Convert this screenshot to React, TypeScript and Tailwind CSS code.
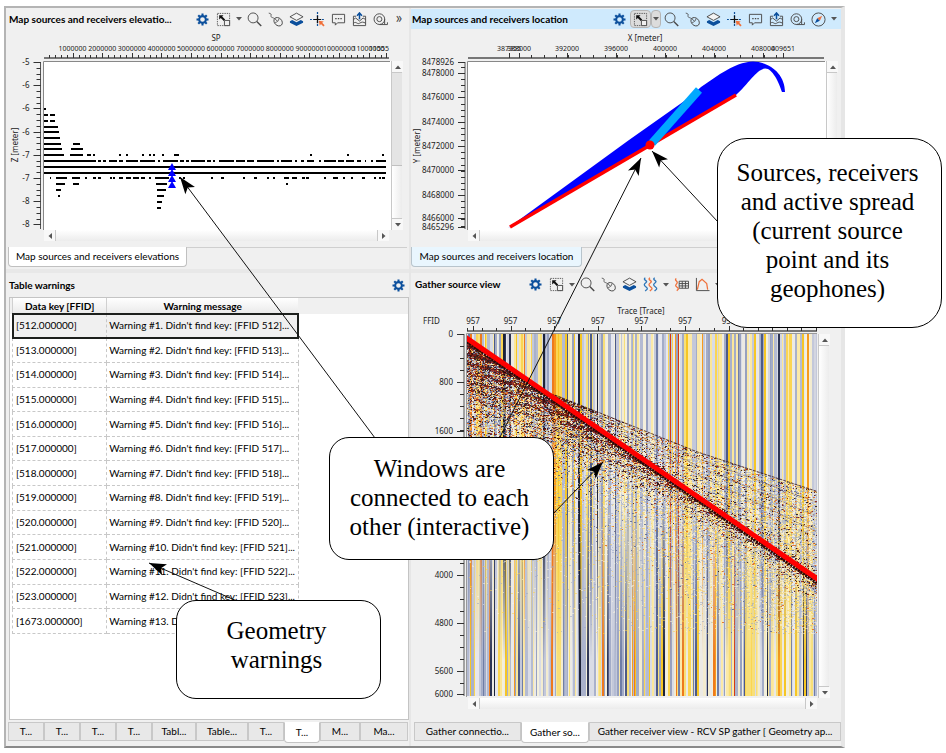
import type { ReactNode } from "react"

const AXIS = "'Noto Sans',sans-serif"
const BLUE = "#0b4f9c"
const ORANGE = "#f0703a"

/* ---------- icons ---------- */

function Icon({ children }: { children: ReactNode }) {
  return (
    <svg viewBox="0 0 16 16" className="h-[15px] w-[15px]" fill="none" stroke="#4a4a4a">
      {children}
    </svg>
  )
}

const GearIcon = () => (
  <Icon>
    <g stroke={BLUE}>
      <circle cx="8" cy="8" r="3.6" strokeWidth="2.2" />
      {[0, 45, 90, 135, 180, 225, 270, 315].map((a) => (
        <path key={a} d="M8 1.6v2.4" strokeWidth="2.2" transform={`rotate(${a} 8 8)`} />
      ))}
    </g>
  </Icon>
)

const SelectIcon = () => (
  <Icon>
    <path d="M1.500 1.500h13v13h-13z" strokeWidth="0.900" strokeDasharray="1.500 1" />
    <path d="M3.400 3.400h4.600L6.600 4.800l3.200 3.200-1.500 1.500-3.200-3.200-1.700 1.700z" fill="#111" stroke="none" />
    <path d="M9 9h5.500v5.500H9z" fill="#f0f0f0" />
  </Icon>
)

const SearchIcon = () => (
  <Icon>
    <circle cx="6.500" cy="6.300" r="5.300" />
    <path d="M10.400 10.200l4.800 4.800" strokeWidth="1.500" />
  </Icon>
)

const MouseIcon = () => (
  <Icon>
    <ellipse cx="10.800" cy="10.400" rx="5" ry="3.900" transform="rotate(45 10.800 10.400)" />
    <path d="M.8 1.200c2 .2 3.200 1.400 2.400 2.600s.6 1.800 4 3.200M7.600 11.200c2-.2 3.800-2 4.200-4.200M7.200 7l3 3" strokeWidth="0.900" />
  </Icon>
)

const LayersIcon = () => (
  <Icon>
    <path d="M1 9.800L3.400 8.600 8 11l4.600-2.400L15 9.800v1.600L8 15l-7-3.600z" fill={BLUE} stroke="none" />
    <path d="M8 1.200l7 3.900-7 3.800-7-3.800z" fill="#f4f4f4" />
  </Icon>
)

const CrosshairIcon = () => (
  <Icon>
    <path d="M8 0v16M0 8h16" stroke={BLUE} strokeWidth="1.300" strokeDasharray="2 1.200" />
    <path d="M8 4v8M4 8h8" stroke="#111" strokeWidth="1.300" />
    <path d="M9.400 9.200l5.200 1-1.600 1.300 2.600 2.700-1.300 1.300-2.600-2.600-1.300 1.700z" fill={ORANGE} stroke="none" />
  </Icon>
)

const ChatIcon = () => (
  <Icon>
    <path d="M1.500 2.500h13v9H7L4.600 14v-2.500H1.500z" />
    <path d="M4.500 7h1.500M7.300 7h1.500M10 7h1.500" strokeWidth="1.400" />
  </Icon>
)

const TrayIcon = () => (
  <Icon>
    <path d="M4.500 4.500H1.500v10h13v-10h-3M1.500 8l2.400-1.600L8 9.600l3.800-3.200L14.500 8M1.500 12c3-2.600 4 1.600 6.500 0s4-1.600 6.500 0" />
    <path d="M8 7.600V2M5.400 4L8 1l2.600 3" stroke={BLUE} strokeWidth="1.600" />
  </Icon>
)

const TapeIcon = () => (
  <Icon>
    <circle cx="6.800" cy="7.600" r="5.700" />
    <circle cx="6.800" cy="7.600" r="2.700" />
    <path d="M6.800 13.400h8.600v-2.400M12.400 7.600v5.600" />
  </Icon>
)

const CompassIcon = () => (
  <Icon>
    <circle cx="8" cy="8" r="7" />
    <path d="M12 4L9.400 9.400 6.600 6.600z" fill={ORANGE} stroke="none" />
    <path d="M4 12l2.600-5.400 2.800 2.800z" fill={BLUE} stroke="none" />
  </Icon>
)

const WavesIcon = () => (
  <Icon>
    {[-5, 0, 5].map((dx) => (
      <path
        key={dx}
        d="M7.500 .8c-3.600 2.400 3.400 3 .8 5s-2.600 2.800 0 4.800 1 2.600-1 4.400"
        transform={`translate(${dx} 0)`}
        stroke={dx === 0 ? ORANGE : "#2f76b8"}
        strokeWidth="1.400"
      />
    ))}
  </Icon>
)

const WaveTableIcon = () => (
  <Icon>
    <path d="M5.500 4.500h10v7.500h-10zM5.500 7h10M5.500 9.500h10M8.800 4.500V12M12.200 4.500V12" />
    <path d="M2.500 1.500c-3 2.400 2.400 3 .8 5s-2.400 2.800 0 4.400 1.400 2.400-.4 3.600" stroke={ORANGE} strokeWidth="1.400" />
  </Icon>
)

const CurveIcon = () => (
  <Icon>
    <path d="M1.500 1v13.500h14" />
    <path d="M2.500 13.500L4.500 5l3-2.500 5 4.500 1 6.500" stroke={ORANGE} strokeWidth="1.300" />
  </Icon>
)

function Tool({ label, active, children }: { label: string; active?: boolean; children: ReactNode }) {
  return (
    <button
      type="button"
      aria-label={label}
      className={`flex h-[18px] w-[21px] items-center justify-center ${active ? "rounded-sm border border-[#b5b5b5] bg-[#dcdcdc]" : ""}`}
    >
      {children}
    </button>
  )
}

function Caret({ active }: { active?: boolean }) {
  return (
    <button
      type="button"
      aria-label="More options"
      className={`flex h-[18px] w-[10px] items-center justify-center ${active ? "rounded-sm border border-[#b5b5b5] bg-[#dcdcdc]" : ""}`}
    >
      <svg viewBox="0 0 6 4" className="h-1 w-1.5 shrink-0">
        <path d="M0 0h6L3 3.500z" fill="#555" />
      </svg>
    </button>
  )
}

function CommonTools({ active }: { active?: boolean }) {
  return (
    <>
      <Tool label="Settings"><GearIcon /></Tool>
      <Tool label="Select area" active={active}><SelectIcon /></Tool>
      <Caret active={active} />
      <Tool label="Zoom"><SearchIcon /></Tool>
      <Tool label="Mouse mode"><MouseIcon /></Tool>
      <Tool label="Layers"><LayersIcon /></Tool>
    </>
  )
}

function MapTools() {
  return (
    <>
      <Tool label="Pick point"><CrosshairIcon /></Tool>
      <Tool label="Comment"><ChatIcon /></Tool>
      <Tool label="Export image"><TrayIcon /></Tool>
      <Tool label="Measure"><TapeIcon /></Tool>
    </>
  )
}

/* ---------- scroll bars ---------- */

function Arrow({ dir, label }: { dir: "up" | "down" | "left" | "right"; label: string }) {
  const d = {
    up: "M1 6h6L4 2.500z",
    down: "M1 2h6L4 5.500z",
    left: "M6 1v6L2.500 4z",
    right: "M2 1v6l3.500-3z",
  }[dir]
  return (
    <button type="button" aria-label={label} className="flex h-[11px] w-[11px] shrink-0 items-center justify-center bg-[#f8f8f8]">
      <svg viewBox="0 0 8 8" className="h-2 w-2">
        <path d={d} fill="#555" />
      </svg>
    </button>
  )
}

function VScroll({ thumb }: { thumb?: boolean }) {
  return (
    <div className="flex w-[11px] flex-col border-l border-[#c8c8c8]">
      <Arrow dir="up" label="Scroll up" />
      <div className="flex-1 border-y border-[#c8c8c8] bg-linear-to-r from-white to-[#ececec]">
        {thumb && <div className="h-[64%] border-b border-[#c0c0c0] bg-[#e4e4e4]" />}
      </div>
      <Arrow dir="down" label="Scroll down" />
    </div>
  )
}

function HScroll() {
  return (
    <div className="flex h-[11px] w-full">
      <Arrow dir="left" label="Scroll left" />
      <div className="flex-1 border-x border-[#c8c8c8] bg-linear-to-b from-white to-[#ececec]" />
      <Arrow dir="right" label="Scroll right" />
    </div>
  )
}

/* ---------- plots ---------- */

const range = (from: number, to: number, step: number) => {
  const out: number[] = []
  for (let v = from; v <= to + 0.01; v += step) out.push(v)
  return out
}

type Tick = [number, string]

type XAxisProps = { ticks: Tick[]; minor: number[]; y: number; from: number; to: number; size: number }

function XAxis({ ticks, minor, y, from, to, size }: XAxisProps) {
  return (
    <g>
      <path d={`M${from} ${y}H${to}`} stroke="#777" strokeWidth="2" />
      <path d={minor.map((x) => `M${Math.round(x)}.5 ${y}v-3`).join("")} stroke="#333" />
      <path d={ticks.map(([x]) => `M${Math.round(x)}.5 ${y}v-5`).join("")} stroke="#333" />
      {ticks.map(([x, t]) => (
        <text key={x} x={x} y={y - 7} textAnchor="middle" fontSize={size}>{t}</text>
      ))}
    </g>
  )
}

function YAxis({ ticks, minor, x, from, to }: { ticks: Tick[]; minor: number[]; x: number; from: number; to: number }) {
  return (
    <g>
      <path d={`M${x} ${from}V${to}`} stroke="#555" />
      <path d={minor.map((y) => `M${x} ${Math.round(y)}.5h-4`).join("")} stroke="#333" />
      <path d={ticks.map(([y]) => `M${x} ${Math.round(y)}.5h-7`).join("")} stroke="#333" />
      {ticks.filter(([, t]) => t).map(([y, t]) => (
        <text key={y} x={x - 11} y={y + 3} textAnchor="end">{t}</text>
      ))}
    </g>
  )
}

// each row: y followed by [start, end] pairs
const ELEVATION: [number, [number, number][]][] = [
  [109, [[44, 46]]],
  [115, [[44, 48], [50, 55]]],
  [121, [[44, 48], [50, 55]]],
  [127, [[44, 58]]],
  [132, [[44, 59]]],
  [138, [[44, 60]]],
  [144, [[44, 61], [73, 80]]],
  [149, [[44, 62], [71, 83]]],
  [155, [[44, 64], [70, 83], [87, 91], [93, 95], [119, 121], [126, 128], [142, 144], [149, 151], [153, 155], [162, 164], [174, 179], [310, 312], [347, 349], [382, 384]]],
  [161, [[44, 96], [98, 101], [103, 106], [109, 117], [119, 123], [126, 138], [140, 155], [158, 160], [163, 178], [180, 184], [186, 189], [191, 205], [207, 211], [213, 215], [219, 234], [236, 245], [247, 254], [257, 274], [277, 279], [281, 292], [295, 297], [301, 304], [307, 314], [319, 321], [324, 336], [338, 344], [346, 354], [357, 361], [365, 366], [371, 373], [376, 386]]],
  [167, [[44, 386]]],
  [173, [[44, 386]]],
  [178, [[50, 51], [56, 67], [72, 80], [85, 87], [93, 96], [98, 101], [110, 112], [113, 115], [119, 123], [126, 131], [133, 139], [141, 145], [149, 151], [155, 169], [179, 181], [183, 185], [211, 213], [221, 224], [243, 245], [254, 257], [267, 269], [273, 275], [284, 289], [292, 297], [302, 305], [306, 309], [324, 326], [333, 338], [343, 345], [351, 353], [362, 365], [374, 376], [379, 381], [382, 385]]],
  [184, [[56, 65], [73, 79], [156, 167], [286, 288]]],
  [190, [[56, 61], [157, 166]]],
  [196, [[58, 60], [157, 164]]],
  [202, [[157, 162]]],
  [208, [[157, 161]]],
]

function ElevationPlot() {
  const x: Tick[] = range(1, 11, 1).map((n) => [43 + n * 29.6, `${n}000000`])
  const y: Tick[] = ["-5", "-6", "-6", "-6", "-7", "-7", "-8", "-8"].map((t, i) => [62 + i * 23.2, t])
  return (
    <svg viewBox="6 30 385 200" className="block min-w-0 flex-1 overflow-visible" fontFamily={AXIS} fontSize="8" fill="#222">
      <text x="216" y="41" textAnchor="middle">SP</text>
      <XAxis ticks={x} minor={range(49, 386, 5.92)} y={58} from={44} to={389} size={7} />
      <text x="389" y="51" textAnchor="end" fontSize="7">11555</text>
      <path d="M386.500 53v5" stroke="#333" />
      <YAxis ticks={y} minor={range(62, 226, 5.8)} x={40.5} from={62} to={229} />
      <text transform="translate(18 145) rotate(-90)" textAnchor="middle">Z [meter]</text>
      <path d="M43 61h348v169H43z" fill="#fff" />
      <path d="M43.500 230V61.500H390" stroke="#888" fill="none" />
      <path
        d={ELEVATION.flatMap(([row, bars]) => bars.map(([a, b]) => `M${a} ${row}H${b}`)).join("")}
        stroke="#000"
        strokeWidth="2"
      />
      {[167, 173, 179, 185].map((t) => (
        <path key={t} d={`M172 ${t - 4}l4 7h-8z`} fill="#0000ff" />
      ))}
    </svg>
  )
}

function LocationPlot() {
  const x: Tick[] = [
    [509, "387355"], [519, "388000"], [567, "392000"], [616, "396000"],
    [665, "400000"], [714, "404000"], [763, "408000"], [783, "409651"],
  ]
  const y: Tick[] = [
    [62, "8478926"], [73, "8478000"], [97, "8476000"], [122, "8474000"], [146, "8472000"],
    [170, "8470000"], [195, "8468000"], [218, "8466000"], [227, "8465296"],
  ]
  return (
    <svg viewBox="411 30 415 200" className="block min-w-0 flex-1 overflow-visible" fontFamily={AXIS} fontSize="8" fill="#222">
      <text x="645" y="41" textAnchor="middle">X [meter]</text>
      <XAxis ticks={x} minor={range(519, 783, 12.25)} y={58} from={468} to={824} size={7} />
      <YAxis ticks={y} minor={range(67, 227, 6.1)} x={465} from={62} to={229} />
      <text transform="translate(420 146) rotate(-90)" textAnchor="middle">Y [meter]</text>
      <path d="M467 61h359v169H467z" fill="#fff" />
      <path d="M467.500 230V61.500H825" stroke="#888" fill="none" />
      <path
        d="M508 228L629 140 690 97 701 87 720 74C735 65 743 62 753 61.500 770 62 785 74 785 92h-3C779 82 772 68 765 68.500 757 69 748 84 736 95L650 146z"
        fill="#0000ff"
      />
      <path d="M510 227L736 95" stroke="#f00" strokeWidth="3.500" />
      <path d="M652 143L699 90" stroke="#00a8ff" strokeWidth="8" />
      <circle cx="650" cy="145" r="4.500" fill="#f00" />
    </svg>
  )
}

// small seeded generator so the section looks the same on every render
function seeded(seed: number) {
  let s = seed
  return () => {
    s = (s * 1664525 + 1013904223) % 4294967296
    return s / 4294967296
  }
}

const TRACE_COLORS = [
  "#f4f0dc", "#fbe79a", "#fbd552", "#f6c624", "#f8df78", "#e6e7ee", "#c3c8da", "#a9b1cb",
  "#97a1c0", "#d9dce6", "#f3ecd0", "#b4bbd2", "#fbe9a8", "#d4d6e0", "#eceae4", "#a3acc8",
]
const HOT_COLORS = ["#ee7a1c", "#d63a12", "#2c3454", "#f79a1e", "#4d5a86", "#6f7da6", "#1c2238"]

function makeTraces(seed: number) {
  const rnd = seeded(seed)
  const out: { x: number; w: number; c: string }[] = []
  let x = 0
  while (x < 350) {
    const hot = rnd() < 0.14
    const w = hot ? (rnd() < 0.5 ? 1 : 2) : rnd() < 0.4 ? 1 : rnd() < 0.85 ? 2 : 3
    const list = hot ? HOT_COLORS : TRACE_COLORS
    out.push({ x, w, c: list[Math.floor(rnd() * list.length)] })
    x += w
  }
  return out
}

const directWave = (x: number) => 4 + x * 0.688
const firstBreak = (x: number) => (x < 88 ? directWave(x) : 61 + (x - 88) * 0.4 - Math.max(0, x - 230) * 0.07)

const NOISE_COLORS = ["#1a080c", "#4a0c0c", "#8c1a12", "#e2681a", "#fcd04a", "#fbf6e2", "#9aa5c4", "#5d6890"]

function makeNoise() {
  const rnd = seeded(77)
  const paths = NOISE_COLORS.map(() => "")
  for (let x = 0; x < 350; x++) {
    const top = firstBreak(x)
    const direct = directWave(x)
    const left = Math.exp(-x / 100)
    for (let y = Math.ceil(top); y < 300; y++) {
      const below = y - direct
      let density: number
      let dark: number
      let band: number
      if (below < 0) {
        density = 0.6
        dark = 0.05 + 0.4 * Math.exp(-(y - top) / 12) * Math.exp(-(x - 88) / 100) + 0.5 * Math.exp(below / 5)
        band = Math.sin((y - top) * 0.9)
      } else {
        const reach = 16 + 90 * left
        density = 0.9 * Math.exp(-Math.pow(below / reach, 2)) + 0.5 * Math.exp(-below / 60)
        dark = 0.9 * Math.exp(-below / (5 + 46 * left))
        band = Math.sin((y - x * 0.25) * 0.7)
      }
      if (rnd() > density) continue
      dark *= 1 + 0.5 * band
      let i = 4 + Math.floor(rnd() * 3)
      if (rnd() < dark) i = Math.floor(rnd() * 3)
      else if (below < 120 && rnd() < 0.06 + 0.4 * left * Math.exp(-Math.max(0, below) / 80)) i = rnd() < 0.5 ? 3 : 7
      paths[i] += `M${x} ${y}.5h${rnd() < 0.4 ? 2 : 1}`
    }
  }
  return paths
}

const TOP_TRACES = makeTraces(11)
const DEEP_TRACES = makeTraces(29)
const NOISE = makeNoise()

const breakLine = (shift: number) =>
  range(80, 350, 10).map((x, i) => `${i ? "L" : "M"}${x} ${(firstBreak(x) + shift * ((x - 80) / 120)).toFixed(1)}`).join("")

function Section() {
  return (
    <g transform="translate(467 334)">
      <defs>
        <linearGradient id="deep" x1="0" y1="0" x2="0" y2="1">
          <stop offset="0.45" stopColor="#000" />
          <stop offset="0.9" stopColor="#fff" />
        </linearGradient>
        <mask id="deepMask">
          <rect width="350" height="362" fill="url(#deep)" />
        </mask>
        <clipPath id="sectionClip">
          <rect width="350" height="362" />
        </clipPath>
      </defs>
      <g clipPath="url(#sectionClip)" fill="none">
        <g shapeRendering="crispEdges">
          {TOP_TRACES.map((t) => (
            <rect key={t.x} x={t.x} width={t.w} height="362" fill={t.c} />
          ))}
        </g>
        <g mask="url(#deepMask)" shapeRendering="crispEdges">
          {DEEP_TRACES.map((t) => (
            <rect key={t.x} x={t.x} width={t.w} height="362" fill={t.c} />
          ))}
        </g>
        {NOISE.map((d, i) => (
          <path
            key={NOISE_COLORS[i]}
            d={d}
            stroke={NOISE_COLORS[i]}
            shapeRendering="crispEdges"
            opacity={i > 3 && i < 7 ? 0.55 : 0.85}
          />
        ))}
        {[0, 5, 11, 18].map((s) => (
          <path key={s} d={breakLine(s)} stroke="#3a1414" strokeDasharray="3 1" opacity={s ? 0.4 : 0.8} />
        ))}
        <path d="M0 8L350 249" stroke="#2a0808" strokeWidth="3" strokeDasharray="2 1" />
        <path d="M-2 3L352 246" stroke="#f00" strokeWidth="5" />
      </g>
    </g>
  )
}

function GatherPlot() {
  const x: Tick[] = range(0, 6, 1).map((n) => [n ? 467 + n * 43.6 : 473, "957"])
  const y: Tick[] = [
    [334, "0"], [382, "800"], [431, "1600"], [479, ""], [527, ""],
    [575, "4000"], [623, "4800"], [671, "5600"], [694, "6000"],
  ]
  return (
    <svg viewBox="411 296 407 402" className="block min-w-0 flex-1" fontFamily={AXIS} fontSize="8" fill="#222">
      <text x="641" y="314" textAnchor="middle">Trace [Trace]</text>
      <text x="423" y="324">FFID</text>
      <XAxis ticks={x} minor={range(467, 816, 14.53)} y={331} from={467} to={817} size={8} />
      <YAxis ticks={y} minor={range(334, 695, 12.05)} x={464} from={334} to={696} />
      <path d="M466.500 697V333.500H817" stroke="#999" fill="none" />
      <Section />
    </svg>
  )
}

/* ---------- panels ---------- */

function Title({ children }: { children: ReactNode }) {
  return <h2 className="shrink-0 font-bold whitespace-nowrap">{children}</h2>
}

const WARNINGS = [512, 513, 514, 515, 516, 517, 518, 519, 520, 521, 522, 523, 1673]

function WarningTable() {
  return (
    <div className="ml-[3px] flex-1 border border-[#c4c4c4] bg-white">
      <div className="h-4 bg-[#f0f0f0]" />
      <table className="-mt-4 ml-[2px] h-[336px] w-[72%] table-fixed border-collapse">
        <thead>
          <tr className="h-4 bg-linear-to-b from-white to-[#e9e9e9]">
            <th scope="col" className="w-[33%] border-r border-l border-[#d0d0d0] p-0 font-bold">Data key [FFID]</th>
            <th scope="col" className="p-0 font-bold">Warning message</th>
          </tr>
        </thead>
        <tbody>
          {WARNINGS.map((ffid, i) => (
            <tr key={ffid} className={i === 0 ? "bg-[#f0f0f0] outline-2 -outline-offset-1 outline-[#1c1f1c]" : ""}>
              <td className="border-r border-b border-l border-dashed border-[#c8c8c8] py-0 pl-[3px] whitespace-nowrap">[{ffid}.000000]</td>
              <td className="border-r border-b border-dashed border-[#c8c8c8] py-0 pl-[2px] whitespace-nowrap">
                Warning #{i + 1}. Didn't find key: [FFID {ffid}]...
              </td>
            </tr>
          ))}
        </tbody>
      </table>
    </div>
  )
}

function DockTab({ label, size, active }: { label: string; size: string; active?: boolean }) {
  return (
    <button
      type="button"
      className={`${size} overflow-hidden border text-center whitespace-nowrap ${
        active ? "h-[21px] rounded-b-sm border-[#c4c4c4] border-t-white bg-white" : "h-[19px] border-[#c8c8c8] bg-[#e8e8e8]"
      }`}
    >
      {label}
    </button>
  )
}

function Callout({ place, children }: { place: string; children: ReactNode }) {
  return (
    <div className={`absolute flex justify-center border border-black bg-white text-center font-['Liberation_Serif',serif] text-[25px] leading-[29px] text-black ${place}`}>
      {children}
    </div>
  )
}

const POINTERS = [
  { from: [375, 438], to: [180, 177] },
  { from: [500, 437], to: [641, 158] },
  { from: [553, 514], to: [603, 462] },
  { from: [718, 222], to: [652, 151] },
  { from: [237, 601], to: [149, 563] },
]

function Pointers() {
  return (
    <svg viewBox="0 0 946 753" className="pointer-events-none absolute top-0 left-0 w-full">
      {POINTERS.map(({ from, to }) => {
        const angle = (Math.atan2(to[1] - from[1], to[0] - from[0]) * 180) / Math.PI
        return (
          <g key={from.join()}>
            <path d={`M${from[0]} ${from[1]}L${to[0]} ${to[1]}`} stroke="#111" />
            <path d="M0 0L-17 6-13 0-17-6z" transform={`translate(${to[0]} ${to[1]}) rotate(${angle})`} />
          </g>
        )
      })}
    </svg>
  )
}

export default function App() {
  return (
    <div className="relative min-h-screen bg-white pt-1.5 font-['Lato','Noto_Sans',sans-serif] text-[10px] text-black">
      <main className="mr-[101px] ml-1 grid grid-cols-[403fr_2fr_430fr] border-t-2 border-r-4 border-b-2 border-l-2 border-t-[#b4b4b4] border-r-[#e6e6e6] border-b-[#8a8a8a] border-l-[#b4b4b4] bg-[#f0f0f0]">
        <section className="flex min-w-0 flex-col">
          <header className="flex h-[22px] items-center pr-[2px] pl-[3px]">
            <Title>Map sources and receivers elevatio...</Title>
            <div className="ml-auto flex shrink-0">
              <CommonTools />
              <MapTools />
              <button type="button" aria-label="More tools" className="h-[14px] w-4 text-base leading-3 text-[#444]">»</button>
            </div>
          </header>
          <div className="flex">
            <ElevationPlot />
            <div className="mr-[7px] flex pt-[31px]"><VScroll thumb /></div>
          </div>
          <div className="pr-[20px] pl-[38px]"><HScroll /></div>
          <div className="mt-1.5 flex h-[20px] pr-[2px] pl-[2px]">
            <button type="button" className="h-[20px] w-[179px] rounded-b-sm border border-t-0 border-[#c0c0c0] bg-white">
              Map sources and receivers elevations
            </button>
            <div className="flex-1 border-t border-[#cfcfcf]" />
          </div>
          <header className="mt-[2px] flex h-[28px] items-center border-t-4 border-[#e8e8e8] pl-[3px]">
            <Title>Table warnings</Title>
            <div className="ml-auto flex"><Tool label="Settings"><GearIcon /></Tool></div>
          </header>
          <WarningTable />
          <div className="mt-[2px] mb-[3px] flex h-[21px] pr-px pl-[2px]">
            <DockTab label="T..." size="w-[9%]" />
            <DockTab label="T..." size="w-[9%]" />
            <DockTab label="T..." size="w-[9%]" />
            <DockTab label="T..." size="w-[9%]" />
            <DockTab label="Tabl..." size="w-[11%]" />
            <DockTab label="Table..." size="w-[13%]" />
            <DockTab label="T..." size="w-[9%]" />
            <DockTab label="T..." size="w-[9%]" active />
            <DockTab label="M..." size="w-[10%]" />
            <DockTab label="Ma..." size="flex-1" />
          </div>
        </section>

        <div className="bg-[#e6e6e6]" />

        <section className="flex min-w-0 flex-col">
          <header className="mt-px mb-px flex h-[20px] items-center bg-[#cfeafd] pr-[2px] pl-px">
            <Title>Map sources and receivers location</Title>
            <div className="ml-auto flex shrink-0">
              <CommonTools active />
              <MapTools />
              <Tool label="Compass"><CompassIcon /></Tool>
              <Caret />
            </div>
          </header>
          <div className="flex">
            <LocationPlot />
            <div className="mr-1 flex pt-[31px]"><VScroll /></div>
          </div>
          <div className="pr-[15px] pl-[57px]"><HScroll /></div>
          <div className="mt-1.5 flex h-[20px]">
            <button type="button" className="h-[20px] w-[171px] rounded-b-sm border border-t-0 border-[#b8c4cc] bg-[#e9f6fe]">
              Map sources and receivers location
            </button>
            <div className="flex-1 border-t border-[#cfcfcf]" />
          </div>
          <header className="mt-[2px] flex h-[27px] items-center border-t-4 border-[#e8e8e8] pl-1">
            <div className="w-[110px]"><Title>Gather source view</Title></div>
            <div className="flex">
              <CommonTools />
              <Tool label="Wiggle mode"><WavesIcon /></Tool>
              <Caret />
              <Tool label="Trace table"><WaveTableIcon /></Tool>
              <Tool label="Spectrum"><CurveIcon /></Tool>
              <Caret />
            </div>
          </header>
          <div className="flex">
            <GatherPlot />
            <div className="mr-[12px] flex pt-[38px]"><VScroll /></div>
          </div>
          <div className="pr-[24px] pl-[57px]"><HScroll /></div>
          <div className="mt-[13px] mb-[3px] flex h-[21px] pl-[3px]">
            <DockTab label="Gather connectio..." size="w-[25%]" />
            <DockTab label="Gather so..." size="w-[16%]" active />
            <DockTab label="Gather receiver view - RCV SP gather [ Geometry ap..." size="flex-1" />
          </div>
        </section>
      </main>

      <Pointers />
      <Callout place="top-[138px] right-[4px] w-[225px] rounded-[30px] pt-[19px] pr-1 pb-[24px]">
        <p>
          Sources, receivers<br />and active spread<br />(current source<br />point and its<br />geophones)
        </p>
      </Callout>
      <Callout place="top-[437px] left-[329px] w-[225px] rounded-[20px] pt-[16px] pr-1 pb-[18px]">
        <p>
          Windows are<br />connected to each<br />other (interactive)
        </p>
      </Callout>
      <Callout place="top-[600px] left-[176px] w-[205px] rounded-[20px] pt-[15px] pr-1 pb-[24px]">
        <p>
          Geometry<br />warnings
        </p>
      </Callout>
    </div>
  )
}
